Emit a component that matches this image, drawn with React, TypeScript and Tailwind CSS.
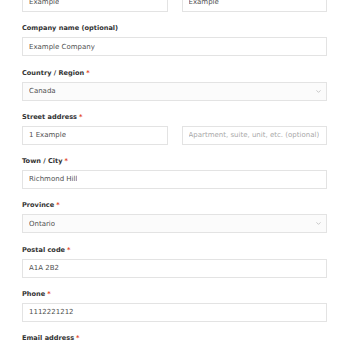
import { ChevronDown } from 'lucide-react';

type Field = {
  label: string;
  required?: boolean;
  value?: string;
  select?: boolean;
  second?: string;
};

const fields: Field[] = [
  { label: 'Company name (optional)', value: 'Example Company' },
  { label: 'Country / Region', required: true, value: 'Canada', select: true },
  { label: 'Street address', required: true, value: '1 Example', second: 'Apartment, suite, unit, etc. (optional)' },
  { label: 'Town / City', required: true, value: 'Richmond Hill' },
  { label: 'Province', required: true, value: 'Ontario', select: true },
  { label: 'Postal code', required: true, value: 'A1A 2B2' },
  { label: 'Phone', required: true, value: '1112221212' },
  { label: 'Email address', required: true, value: 'example@example.com' },
];

function Label({ text, required }: { text: string; required?: boolean }) {
  return (
    <div className="h-[10px] leading-[10px] mb-[4px] text-[6.6px] font-bold text-[#333]">
      {text}
      {required && <span className="text-[#e2401c] ml-[2px]">*</span>}
    </div>
  );
}

function Box({ value, placeholder, select }: { value?: string; placeholder?: boolean; select?: boolean }) {
  return (
    <div
      className={`h-[19px] border border-[#e3e3e3] flex items-center justify-between pl-[6px] pr-[4px] text-[7px] ${
        select ? 'bg-[#fbfbfb]' : 'bg-white'
      } ${placeholder ? 'text-[#a8a8a8]' : 'text-[#505050]'}`}
    >
      <span className="truncate">{value}</span>
      {select && <ChevronDown className="w-[7px] h-[7px] text-[#b5b5b5]" strokeWidth={2.5} />}
    </div>
  );
}

export default function App() {
  return (
    <div className="w-[340px] h-[340px] overflow-hidden bg-white font-['DejaVu_Sans',Verdana,sans-serif]">
      <div className="ml-[22px] w-[305px] mt-[-21px] flex flex-col gap-[11.3px]">
        {/* first / last name row */}
        <div className="grid grid-cols-2 gap-[14px]">
          <div>
            <Label text="First name" required />
            <Box value="Example" />
          </div>
          <div>
            <Label text="Last name" required />
            <Box value="Example" />
          </div>
        </div>

        {fields.map((f) => (
          <div key={f.label}>
            <Label text={f.label} required={f.required} />
            {f.second ? (
              <div className="grid grid-cols-2 gap-[14px]">
                <Box value={f.value} />
                <Box value={f.second} placeholder />
              </div>
            ) : (
              <Box value={f.value} select={f.select} />
            )}
          </div>
        ))}
      </div>
    </div>
  );
}
